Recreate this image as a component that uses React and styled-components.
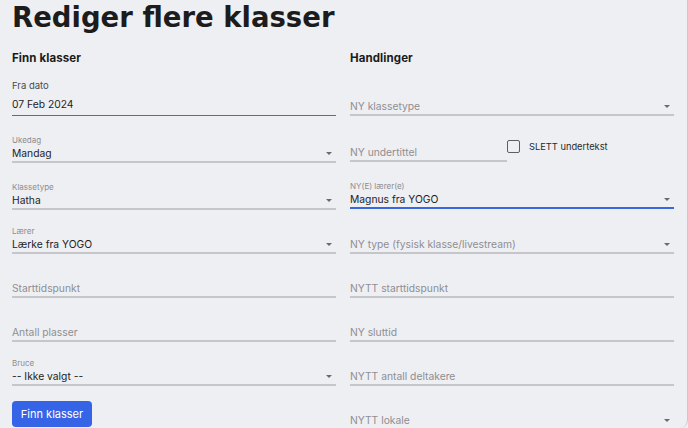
import React from "react";
import styled, { createGlobalStyle } from "styled-components";

const Global = createGlobalStyle`
  html, body { margin: 0; padding: 0; background: #eeeff2; }
  body { font-family: Inter, "Noto Sans", sans-serif; color: #1e1e1e; }
  * { box-sizing: border-box; }
`;

const Page = styled.div`
  width: 688px;
  height: 428px;
  overflow: hidden;
  padding: 0 14px 0 12px;
  background: #eeeff2;
  border-right: 1px solid #c9c9cd;
  border-bottom-right-radius: 8px;
`;

const Title = styled.h1`
  margin: 0;
  font-family: "DejaVu Sans", Inter, sans-serif;
  font-size: 27.5px;
  line-height: 34px;
  font-weight: 700;
  color: #1c1c1c;
`;

const Columns = styled.div`
  display: grid;
  grid-template-columns: 324px 324px;
  column-gap: 14px;
  margin-top: 16px;
`;

const Column = styled.div`
  display: flex;
  flex-direction: column;
`;

const Heading = styled.h2`
  margin: 0 0 4px;
  font-size: 11.5px;
  line-height: 16px;
  font-weight: 700;
  color: #1a1a1a;
  letter-spacing: 0.1px;
`;

const borders = {
  dark: "1px solid #6b6b6f",
  light: "2px solid #c6c6ca",
  focus: "2px solid #3a66e0",
};

const FieldBox = styled.div`
  display: flex;
  flex-direction: column;
  justify-content: flex-end;
  height: ${(p) => p.$h}px;
  width: ${(p) => (p.$w ? `${p.$w}px` : "100%")};
  flex: none;
  border-bottom: ${(p) => borders[p.$tone]};
`;

const Label = styled.div`
  font-size: ${(p) => (p.$big ? "9.5px" : "8px")};
  line-height: ${(p) => (p.$big ? "12px" : "10px")};
  margin-bottom: ${(p) => (p.$big ? "3px" : "0")};
  color: ${(p) => (p.$big ? "#4a4a4e" : "#8d8d91")};
`;

const ValueRow = styled.div`
  display: flex;
  align-items: center;
  justify-content: space-between;
  height: ${(p) => (p.$big ? "18px" : "16px")};
  margin-bottom: ${(p) => (p.$big ? "2px" : "0")};
`;

const Value = styled.span`
  font-size: 10.3px;
  color: ${(p) => (p.$placeholder ? "#8e8e92" : "#1e1e1e")};
  white-space: nowrap;
`;

const Caret = styled.span`
  width: 0;
  height: 0;
  margin-right: 4px;
  border-left: 3px solid transparent;
  border-right: 3px solid transparent;
  border-top: 3px solid #6a6a6e;
`;

const Row = styled.div`
  display: flex;
  align-items: flex-start;
  height: ${(p) => p.$h}px;
`;

const CheckGroup = styled.label`
  display: flex;
  align-items: center;
  gap: 9px;
  margin-top: 24px;
  font-size: 9.3px;
  color: #2a2a2a;
`;

const Box = styled.span`
  width: 13px;
  height: 13px;
  border: 1.5px solid #5e5e62;
  border-radius: 2px;
`;

const Button = styled.button`
  margin-top: 15px;
  width: 80px;
  height: 26px;
  border: none;
  border-radius: 4px;
  background: #3664e6;
  color: #fff;
  font-family: inherit;
  font-size: 11px;
  font-weight: 400;
  padding: 0;
  align-self: flex-start;
`;

function Field({ h, w, tone = "light", label, big, value, placeholder, select }) {
  return (
    <FieldBox $h={h} $w={w} $tone={tone}>
      {label && <Label $big={big}>{label}</Label>}
      <ValueRow $big={big}>
        <Value $placeholder={!!placeholder}>{value || placeholder}</Value>
        {select && <Caret />}
      </ValueRow>
    </FieldBox>
  );
}

export default function App() {
  return (
    <Page>
      <Global />
      <Title>Rediger flere klasser</Title>
      <Columns>
        <Column>
          <Heading>Finn klasser</Heading>
          <Field h={46} tone="dark" big label="Fra dato" value="07 Feb 2024" />
          <Field h={47} label="Ukedag" value="Mandag" select />
          <Field h={47} label="Klassetype" value="Hatha" select />
          <Field h={44} label="Lærer" value="Lærke fra YOGO" select />
          <Field h={44} placeholder="Starttidspunkt" />
          <Field h={44} placeholder="Antall plasser" />
          <Field h={44} label="Bruce" value="-- Ikke valgt --" select />
          <Button>Finn klasser</Button>
        </Column>
        <Column>
          <Heading>Handlinger</Heading>
          <Field h={46} placeholder="NY klassetype" select />
          <Row $h={46}>
            <Field h={46} w={157} placeholder="NY undertittel" />
            <CheckGroup>
              <Box />
              SLETT undertekst
            </CheckGroup>
          </Row>
          <Field h={47} tone="focus" label="NY(E) lærer(e)" value="Magnus fra YOGO" select />
          <Field h={45} placeholder="NY type (fysisk klasse/livestream)" select />
          <Field h={44} placeholder="NYTT starttidspunkt" />
          <Field h={44} placeholder="NY sluttid" />
          <Field h={44} placeholder="NYTT antall deltakere" />
          <Field h={44} placeholder="NYTT lokale" select />
        </Column>
      </Columns>
    </Page>
  );
}
